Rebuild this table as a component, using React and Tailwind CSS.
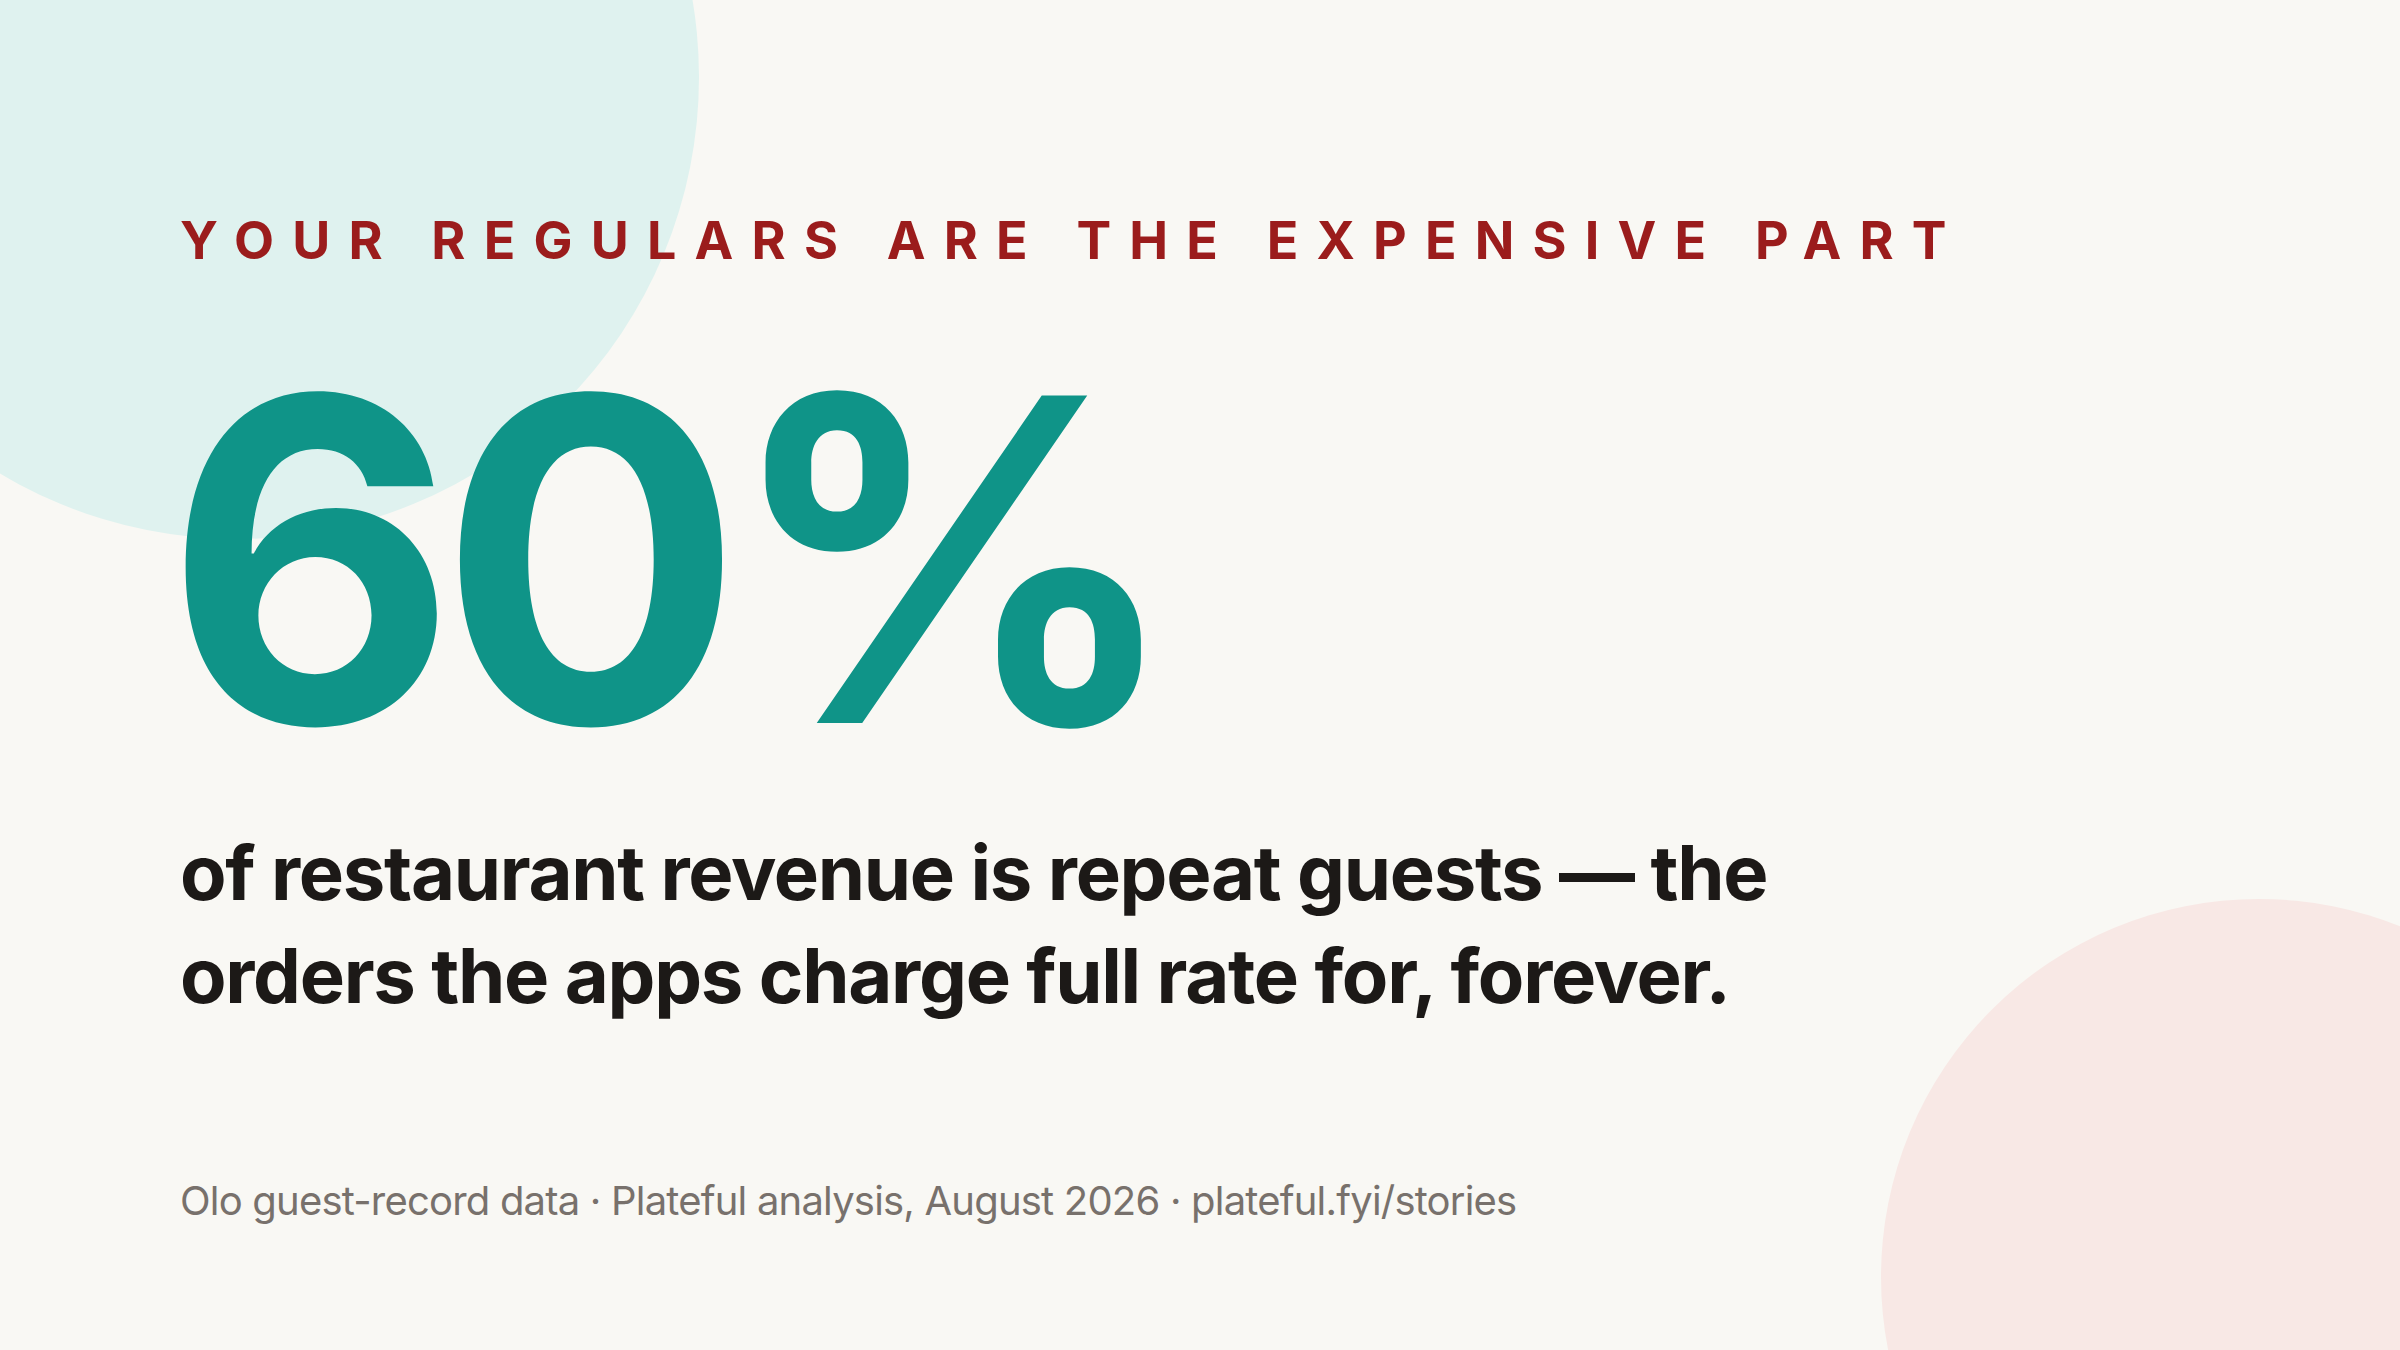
export default function App() {
  return (
    <div
      className="relative w-full h-screen overflow-hidden bg-[#f9f8f4]"
      style={{ fontFamily: "Inter, 'Noto Sans', sans-serif" }}
    >
      {/* decorative blobs */}
      <div className="absolute -left-[225px] -top-[385px] w-[924px] h-[924px] rounded-full bg-[#dff2ef]" />
      <div className="absolute -right-[237px] -bottom-[305px] w-[756px] h-[756px] rounded-full bg-[#f8e8e5]" />

      <div className="relative flex flex-col pl-[180px] pt-[215px]">
        <p className="text-[52px] leading-none font-bold uppercase tracking-[0.35em] text-[#9b1c1c]">
          Your regulars are the expensive part
        </p>

        <h1 className="mt-[68px] -ml-[15px] text-[450px] leading-none font-bold tracking-[-0.04em] text-[#0f9488]">
          60%
        </h1>

        <p className="mt-[36px] max-w-[1640px] text-[76px] leading-[103px] font-bold tracking-[-0.017em] text-[#1c1917]">
          of restaurant revenue is repeat guests — the orders the apps charge full rate for, forever.
        </p>

        <p className="mt-[154px] text-[40px] leading-none tracking-[-0.02em] text-[#78716c]">
          Olo guest-record data · Plateful analysis, August 2026 · plateful.fyi/stories
        </p>
      </div>
    </div>
  );
}
